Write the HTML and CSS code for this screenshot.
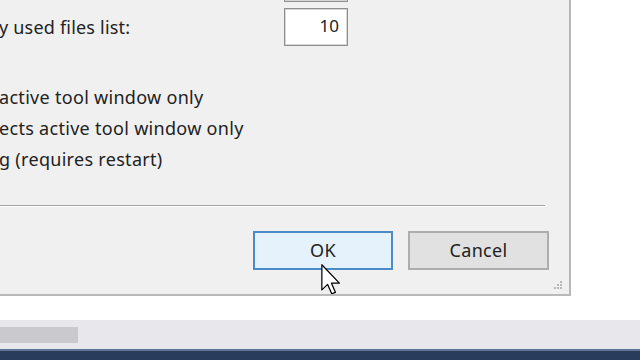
FILE: index.html
```html
<!DOCTYPE html>
<html lang="en">
<head>
  <meta charset="UTF-8">
  <title>Options</title>
  <link rel="stylesheet" href="styles.css">
</head>
<body>

  <div class="dialog">
    <div class="field-row top-row">
      <span class="label"></span>
      <span class="num-box"></span>
    </div>
    <div class="field-row">
      <span class="label">y used files list:</span>
      <span class="num-box">10</span>
    </div>

    <div class="checks">
      <div class="check-line">active tool window only</div>
      <div class="check-line">ects active tool window only</div>
      <div class="check-line">g (requires restart)</div>
    </div>

    <div class="separator"></div>

    <div class="buttons">
      <button class="btn btn-default">OK</button>
      <button class="btn">Cancel</button>
    </div>

    <svg class="grip" width="10" height="10" viewBox="0 0 10 10">
      <rect x="7" y="1" width="2" height="2" fill="#b8b8b8"/>
      <rect x="4" y="4" width="2" height="2" fill="#b8b8b8"/>
      <rect x="7" y="4" width="2" height="2" fill="#b8b8b8"/>
      <rect x="1" y="7" width="2" height="2" fill="#b8b8b8"/>
      <rect x="4" y="7" width="2" height="2" fill="#b8b8b8"/>
      <rect x="7" y="7" width="2" height="2" fill="#b8b8b8"/>
    </svg>

    <svg class="cursor" width="20" height="32" viewBox="0 0 13 21">
      <path d="M0.5 0.5 L0.5 17 L4.3 13.4 L7 19.6 L9.4 18.6 L6.8 12.6 L12 12.6 Z" fill="#fff" stroke="#000" stroke-width="0.8" stroke-linejoin="round"/>
    </svg>
  </div>

  <div class="white-gap"></div>

  <div class="hscroll">
    <div class="thumb"></div>
  </div>

  <div class="status-bar"></div>

</body>
</html>
```

FILE: styles.css
```css
body {
  margin: 0;
  width: 640px;
  height: 360px;
  overflow: hidden;
  background-color: #ffffff;
  font-family: "Noto Sans", "Open Sans", sans-serif;
  color: #222222;
}
.dialog {
  position: relative;
  width: 569px;
  height: 294px;
  background-color: #f0f0f0;
  border-right: 2px solid #b9b9b9;
  border-bottom: 2px solid #b9b9b9;
  overflow: hidden;
}
.field-row {
  display: flex;
  align-items: center;
  height: 38px;
}
.top-row {
  margin-top: -36px;
  margin-bottom: 6px;
}
.label {
  width: 285px;
  font-size: 18px;
  letter-spacing: 0.2px;
  margin-left: -1px;
  padding-bottom: 1px;
}
.num-box {
  box-sizing: border-box;
  width: 64px;
  height: 38px;
  background-color: #ffffff;
  border: 1px solid #8f8f8f;
  box-shadow: inset 0 0 0 1px #d6d6d6;
  font-size: 17px;
  text-align: right;
  padding: 5px 8px 0 0;
}
.checks {
  margin-top: 36px;
  font-size: 18px;
  letter-spacing: 0.3px;
}
.check-line {
  height: 31px;
  line-height: 31px;
  margin-left: -1px;
}
.separator {
  margin-top: 30px;
  width: 545px;
  height: 1px;
  background-color: #a0a0a0;
  border-bottom: 1px solid #ffffff;
}
.buttons {
  display: flex;
  gap: 15px;
  margin-top: 24px;
  padding-left: 253px;
}
.btn {
  box-sizing: border-box;
  width: 141px;
  height: 39px;
  font-family: "Noto Sans", "Open Sans", sans-serif;
  font-size: 18px;
  letter-spacing: 0.3px;
  color: #222222;
  background-color: #e1e1e1;
  border: 2px solid #adadad;
  padding: 0 0 1px 0;
}
.btn-default {
  width: 140px;
  background-color: #e5f1fb;
  border-color: #4a8bc8;
}
.grip {
  position: absolute;
  right: 6px;
  bottom: 4px;
}
.cursor {
  position: absolute;
  left: 321px;
  top: 264px;
}
.white-gap {
  height: 24px;
}
.hscroll {
  height: 29px;
  background-color: #e8e8ec;
  display: flex;
  align-items: center;
}
.thumb {
  width: 78px;
  height: 16px;
  background-color: #c9c9ce;
}
.status-bar {
  height: 11px;
  background-color: #2a3c5c;
  border-top: 2px solid #5e7398;
}
```
